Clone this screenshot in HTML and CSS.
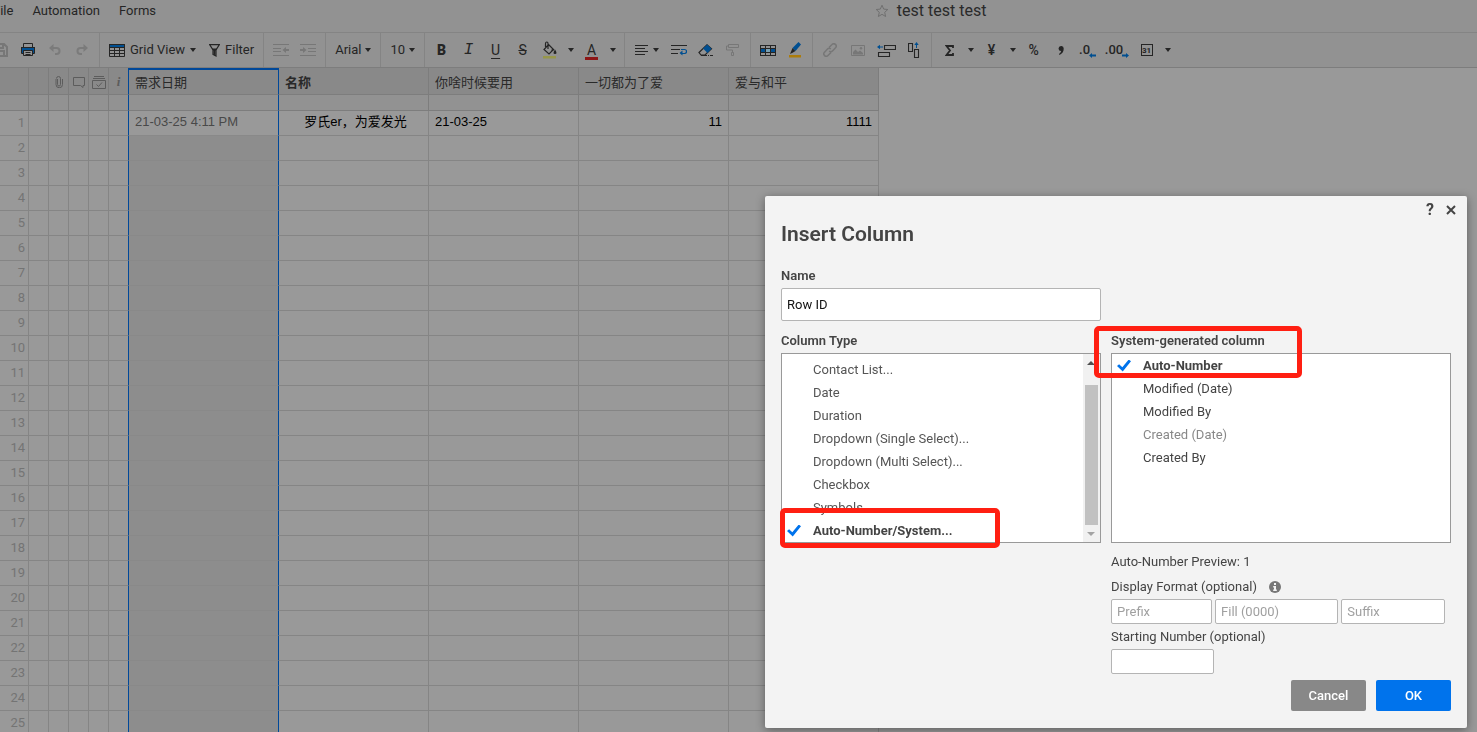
FILE: index.html
```html
<!DOCTYPE html>
<html lang="en">
<head>
<meta charset="utf-8">
<title>test test test</title>
<link rel="stylesheet" href="styles.css">
</head>
<body>
<header class="menubar">
  <nav class="menus"><a href="#">File</a><a href="#">Automation</a><a href="#">Forms</a></nav>
  <button class="star" aria-label="Favorite"><svg width="14" height="14" viewBox="0 0 14 14" fill="none" stroke="#707070"><path d="M7 1.2l1.7 3.9 4.1.4-3.1 2.8.9 4.2L7 10.300l-3.600 2.200.9-4.200L1.200 5.500l4.100-.4z"/></svg></button>
  <h1 class="sheet-name">test test test</h1>
</header>

<div class="toolbar" role="toolbar" aria-label="Formatting">
  <div class="group group-file">
    <button class="tool" aria-label="Save"><svg width="14" height="14" viewBox="0 0 14 14" fill="none" stroke="#777" stroke-width="2"><path d="M1 1h9l3 3v9H1zM4 1v4h5V1M4 13V8h6v5"/></svg></button>
    <button class="tool" aria-label="Print"><svg width="14" height="14" viewBox="0 0 14 14"><path d="M0 4h14v6h-2V8H2v2H0z" fill="#004f91"/><path d="M2.500 4V.5h9V4M.5 4v6.500h2M13.500 4v6.500h-2M2.500 7.500h9v5h-9zM4.500 9.500h5M4.500 11.500h5M.5 4.500h13" fill="none" stroke="#252525"/></svg></button>
    <button class="tool" aria-label="Undo"><svg width="12" height="12" viewBox="0 0 12 12" fill="none" stroke="#7b7b7b" stroke-width="2"><path d="M2 4h5.500a3 3 0 0 1 0 6H6"/><path d="M4.500 0v8L0 4z" fill="#7b7b7b" stroke="none"/></svg></button>
    <button class="tool" aria-label="Redo"><svg width="12" height="12" viewBox="0 0 12 12" fill="none" stroke="#7b7b7b" stroke-width="2"><path d="M10 4H4.500a3 3 0 0 0 0 6H6"/><path d="M7.500 0v8L12 4z" fill="#7b7b7b" stroke="none"/></svg></button>
  </div>
  <div class="group group-view">
    <button class="text-tool"><svg width="16" height="13" viewBox="0 0 16 13"><path d="M0 0h16v4H0z" fill="#252525"/><path d="M1 1h14v2H1z" fill="#004f91"/><path d="M.5 3.500v9h15v-9M.5 6.500h15M.5 9.500h15M5.500 3v10M10.500 3v10" fill="none" stroke="#252525"/></svg>Grid View<i class="caret"></i></button>
    <button class="text-tool"><svg width="11" height="13" viewBox="0 0 11 13" fill="#252525"><path d="M.6.6h9.800L7 6v6L4 10.500V6z" fill="none" stroke="#252525" stroke-width="1.200"/><path d="M3 4.500h5L6.500 7v4.500l-2-1V7z"/></svg>Filter</button>
  </div>
  <div class="group">
    <button class="tool" aria-label="Outdent"><svg width="16" height="12" viewBox="0 0 16 12" fill="none" stroke="#777"><path d="M0 .5h16M0 4.500h8M0 7.500h8M0 11.500h16"/><path d="M16 6h-4" stroke-width="2"/><path d="M13 3v6L9.500 6z" fill="#777" stroke="none"/></svg></button>
    <button class="tool" aria-label="Indent"><svg width="16" height="12" viewBox="0 0 16 12" fill="none" stroke="#777"><path d="M0 .5h16M8 4.500h8M8 7.500h8M0 11.500h16"/><path d="M0 6h4" stroke-width="2"/><path d="M3 3v6l3.500-3z" fill="#777" stroke="none"/></svg></button>
  </div>
  <div class="group group-font"><button class="text-tool">Arial<i class="caret"></i></button></div>
  <div class="group group-font"><button class="text-tool">10<i class="caret"></i></button></div>
  <div class="group">
    <button class="tool glyph bold">B</button>
    <button class="tool glyph italic">I</button>
    <button class="tool glyph underline">U</button>
    <button class="tool glyph strike">S</button>
    <button class="tool" aria-label="Fill color"><svg width="16" height="18" viewBox="0 0 16 18"><path d="M6.500 3.500L11.500 8.500l-4.500 4.500-5-4.500zM6 8V2.500Q6 1 4.800 1T3.500 2.500V6" fill="none" stroke="#252525" stroke-width="1.200"/><path d="M9.500 8.500l2-.5 1 1-3 1z" fill="#252525"/><path d="M13 8.500q3 4.500 0 4.500t0-4.500" fill="#252525"/><path d="M1 15h13v2.500H1z" fill="#97974a"/></svg></button>
    <button class="caret-tool" aria-label="Fill colors"><i class="caret"></i></button>
    <button class="tool" aria-label="Text color"><span class="text-color">A</span></button>
    <button class="caret-tool" aria-label="Text colors"><i class="caret"></i></button>
  </div>
  <div class="group group-align">
    <button class="align-tool" aria-label="Align"><svg width="13" height="12" viewBox="0 0 13 12" stroke="#252525"><path d="M0 1.500h13M0 4.500h10M0 7.500h13M0 10.500h10"/></svg><i class="caret"></i></button>
    <button class="tool" aria-label="Wrap"><svg width="16" height="12" viewBox="0 0 16 12" fill="none"><path d="M0 1.500h16M0 5.500h9M0 9.500h7" stroke="#252525"/><path d="M10 5.500h3.500q2 0 2 2t-2 2H10" stroke="#004f91" stroke-width="1.200"/><path d="M11.500 6.500v5L8.500 9z" fill="#004f91"/></svg></button>
    <button class="tool" aria-label="Clear format"><svg width="15" height="12" viewBox="0 0 15 12"><path d="M1 8.500L9 .8l4.500 4L7 11H3z" fill="none" stroke="#252525" stroke-width="1.200"/><path d="M5 4.500L9.300.5l4.200 4.300L9.500 9z" fill="#004f91"/><path d="M3 11.500h12" stroke="#252525" stroke-dasharray="6 1 1 1"/></svg></button>
    <button class="tool" aria-label="Format painter"><svg width="13" height="12" viewBox="0 0 13 12" fill="none" stroke="#777"><path d="M2.500.5h10v3h-10zM2.500 2H.5v4h6v2M5.500 8.500h2v3h-2z"/></svg></button>
  </div>
  <div class="group">
    <button class="tool" aria-label="Conditional formatting"><svg width="16" height="11" viewBox="0 0 16 11"><path d="M0 0h16v11H0z" fill="#252525"/><path d="M1 1h4v2H1zM6 1h4v2H6zM11 1h4v2h-4zM6 8h4v2H6zM1 8h4v2H1zM11 8h4v2h-4z" fill="#929292"/><path d="M1 4h4v3H1zM11 4h4v3h-4z" fill="#004f91"/><path d="M6 4h4v3H6z" fill="#7aa0b2"/></svg></button>
    <button class="tool" aria-label="Highlight changes"><svg width="14" height="16" viewBox="0 0 14 16"><path d="M10.500 0L13 2.500 7.500 9 4.500 6z" fill="#004f91"/><path d="M4.500 6l3 3-2.500 1.500L2 12z" fill="#252525"/><path d="M1 13h12v2.500H1z" fill="#ac7c0a"/></svg></button>
  </div>
  <div class="group group-insert">
    <button class="tool" aria-label="Link"><svg width="14" height="14" viewBox="0 0 14 14" fill="none" stroke="#777" stroke-width="1.500"><path d="M6 4.500L9 1.500a2.300 2.300 0 0 1 3.500 3.300L9.500 8a2.300 2.300 0 0 1-3.300 0M8 9.500l-3 3A2.300 2.300 0 0 1 1.500 9.200L4.500 6a2.300 2.300 0 0 1 3.300 0"/></svg></button>
    <button class="tool" aria-label="Image"><svg width="14" height="11" viewBox="0 0 14 11"><path d="M.5.5h13v10H.5z" fill="none" stroke="#777"/><path d="M2 9.500V7l2.500-2.500L7 7l2-1.500L12 8v1.500z" fill="#777"/><circle cx="10" cy="3.200" r="1.200" fill="#777"/></svg></button>
    <button class="tool" aria-label="Insert row"><svg width="19" height="13" viewBox="0 0 19 13" fill="none"><path d="M7.500 1.500h11v4h-11zM1.500 8.500h11v4h-11z" stroke="#252525" stroke-width="1.100"/><path d="M2 3h4" stroke="#004f91"/><path d="M3 .8v4.400L0 3z" fill="#004f91"/></svg></button>
    <button class="tool" aria-label="Insert column"><svg width="12" height="16" viewBox="0 0 12 16" fill="none"><path d="M.5 1.500h4v8h-4zM6.500 7.500h4v8h-4z" stroke="#252525" stroke-width="1.100"/><path d="M8.500 2v4" stroke="#004f91"/><path d="M6.300 3h4.400L8.500 0z" fill="#004f91"/></svg></button>
  </div>
  <div class="group group-number">
    <button class="tool" aria-label="Sum"><svg width="9" height="11" viewBox="0 0 9 11" fill="none" stroke="#252525" stroke-width="1.800"><path d="M8 3V1H1.500L5 5.500 1.500 10H8V8"/></svg></button>
    <button class="caret-tool" aria-label="Functions"><i class="caret"></i></button>
    <button class="tool glyph">¥</button>
    <button class="caret-tool" aria-label="Currencies"><i class="caret"></i></button>
    <button class="tool glyph">%</button>
    <button class="tool" aria-label="Thousands"><svg width="6" height="9" viewBox="0 0 6 9" fill="#252525"><path d="M3 0a2.600 2.600 0 0 1 2.700 2.800Q5.700 7 1.500 9L1 8q2-1.200 2.200-2.900A2.500 2.500 0 1 1 3 0"/></svg></button>
    <button class="tool decimal">.0<svg width="7" height="5" viewBox="0 0 7 5" fill="#004f91"><path d="M3 0v1.500h4v2H3V5L0 2.500z"/></svg></button>
    <button class="tool decimal wide">.00<svg width="7" height="5" viewBox="0 0 7 5" fill="#004f91"><path d="M4 0v1.500H0v2h4V5l3-2.500z"/></svg></button>
    <button class="tool" aria-label="Date format"><span class="date-icon">31</span></button>
    <button class="caret-tool" aria-label="Date formats"><i class="caret"></i></button>
  </div>
</div>

<main class="sheet">
<table class="grid">
  <colgroup><col class="c-num"><col class="c-icon" span="5"><col class="c-data" span="5"></colgroup>
  <thead>
    <tr class="names"><th><th>
      <th class="icon"><svg width="8" height="12" viewBox="0 0 8 12" fill="none" stroke="#5c5c5c"><path d="M2.500 3v5.500a1.500 1.500 0 0 0 3 0V2.500a2 2 0 0 0-4 0"/><path d="M7.500 3v5.500a3 3 0 0 1-6.500 0V3"/></svg>
      <th class="icon"><svg width="12" height="11" viewBox="0 0 12 11" fill="none" stroke="#5c5c5c"><path d="M.5.5h11v8H10v2L7.500 8.500h-7z"/></svg>
      <th class="icon"><svg width="14" height="13" viewBox="0 0 14 13" fill="none" stroke="#5c5c5c"><path d="M.5 4.500h13v8H.5zM1 2.500h12M2 .5h10M4.500 8.500l2 2 3.500-4"/></svg>
      <th class="info-head">i
      <th class="selected">需求日期<th class="primary">名称<th>你啥时候要用<th>一切都为了爱<th>爱与和平
    <tr class="filters"><th><th><th><th><th><th class="info-head"><th class="selected"><th><th><th><th>
  </thead>
</table>
<table class="grid rows">
  <colgroup><col class="c-num"><col class="c-icon" span="5"><col class="c-data" span="5"></colgroup>
  <tbody>
    <tr><th>1<td><td><td><td><td><td class="current">21-03-25 4:11 PM<td class="center">罗氏er，为爱发光<td>21-03-25<td class="number">11<td class="number">1111
    <tr><th>2<td><td><td><td><td><td><td><td><td><td>
    <tr><th>3<td><td><td><td><td><td><td><td><td><td>
    <tr><th>4<td><td><td><td><td><td><td><td><td><td>
    <tr><th>5<td><td><td><td><td><td><td><td><td><td>
    <tr><th>6<td><td><td><td><td><td><td><td><td><td>
    <tr><th>7<td><td><td><td><td><td><td><td><td><td>
    <tr><th>8<td><td><td><td><td><td><td><td><td><td>
    <tr><th>9<td><td><td><td><td><td><td><td><td><td>
    <tr><th>10<td><td><td><td><td><td><td><td><td><td>
    <tr><th>11<td><td><td><td><td><td><td><td><td><td>
    <tr><th>12<td><td><td><td><td><td><td><td><td><td>
    <tr><th>13<td><td><td><td><td><td><td><td><td><td>
    <tr><th>14<td><td><td><td><td><td><td><td><td><td>
    <tr><th>15<td><td><td><td><td><td><td><td><td><td>
    <tr><th>16<td><td><td><td><td><td><td><td><td><td>
    <tr><th>17<td><td><td><td><td><td><td><td><td><td>
    <tr><th>18<td><td><td><td><td><td><td><td><td><td>
    <tr><th>19<td><td><td><td><td><td><td><td><td><td>
    <tr><th>20<td><td><td><td><td><td><td><td><td><td>
    <tr><th>21<td><td><td><td><td><td><td><td><td><td>
    <tr><th>22<td><td><td><td><td><td><td><td><td><td>
    <tr><th>23<td><td><td><td><td><td><td><td><td><td>
    <tr><th>24<td><td><td><td><td><td><td><td><td><td>
    <tr><th>25<td><td><td><td><td><td><td><td><td><td>
  </tbody>
</table>
</main>

<form class="dialog" role="dialog" aria-labelledby="dialog-title">
  <div class="dialog-tools">
    <button type="button" aria-label="Help" class="help">?</button>
    <button type="button" aria-label="Close"><svg width="10" height="10" viewBox="0 0 10 10" stroke="#444" stroke-width="2"><path d="M1 1l8 8M9 1l-8 8"/></svg></button>
  </div>
  <h2 id="dialog-title">Insert Column</h2>
  <div class="columns">
    <div class="name-field">
      <label class="heading" for="col-name">Name</label>
      <input class="field name-input" id="col-name" type="text" value="Row ID">
    </div>
    <div class="type-field">
      <div class="heading" id="type-label">Column Type</div>
      <div class="list">
        <div class="options scrolled" role="radiogroup" aria-labelledby="type-label">
          <label><input type="radio" name="type">Contact List...</label>
          <label><input type="radio" name="type">Date</label>
          <label><input type="radio" name="type">Duration</label>
          <label><input type="radio" name="type">Dropdown (Single Select)...</label>
          <label><input type="radio" name="type">Dropdown (Multi Select)...</label>
          <label><input type="radio" name="type">Checkbox</label>
          <label><input type="radio" name="type">Symbols</label>
          <label><input type="radio" name="type" checked>Auto-Number/System...</label>
        </div>
        <div class="scrollbar"><i class="arrow up"></i><i class="thumb"></i><i class="arrow down"></i></div>
      </div>
    </div>
    <div class="system-field">
      <div class="heading" id="system-label">System-generated column</div>
      <div class="list">
        <div class="options dark" role="radiogroup" aria-labelledby="system-label">
          <label><input type="radio" name="system" checked>Auto-Number</label>
          <label><input type="radio" name="system">Modified (Date)</label>
          <label><input type="radio" name="system">Modified By</label>
          <label class="off"><input type="radio" name="system" disabled>Created (Date)</label>
          <label><input type="radio" name="system">Created By</label>
        </div>
      </div>
    </div>
    <div class="format">
      <div class="line">Auto-Number Preview: 1</div>
      <div class="line">Display Format (optional)<svg width="12" height="12" viewBox="0 0 12 12"><circle cx="6" cy="6" r="6" fill="#777"/><path d="M5 2h2v2H5zM4.200 5H7v3.500h.8V10H4.200V8.500H5v-2h-.8z" fill="#f3f3f3"/></svg></div>
      <div class="parts">
        <input class="field prefix" type="text" placeholder="Prefix" aria-label="Prefix">
        <input class="field fill" type="text" placeholder="Fill (0000)" aria-label="Fill">
        <input class="field suffix" type="text" placeholder="Suffix" aria-label="Suffix">
      </div>
      <label class="line" for="start">Starting Number (optional)</label>
      <input class="field start" id="start" type="text">
    </div>
  </div>
  <div class="actions"><button type="button" class="cancel">Cancel</button><button type="submit" class="ok">OK</button></div>
  <div class="mark mark-type"></div>
  <div class="mark mark-system"></div>
</form>
</body>
</html>
```

FILE: styles.css
```css
* { box-sizing: border-box; }
body {
  margin: 0;
  height: 100vh;
  display: flex;
  flex-direction: column;
  overflow: hidden;
  background: #999;
  color: #252525;
  font: 13px/16px Roboto, "Noto Sans CJK SC", sans-serif;
}
button { border: 0; padding: 0; background: none; color: inherit; font: inherit; }
svg { display: block; flex: none; }

.menubar { display: flex; align-items: center; height: 32px; padding-bottom: 10px; background: #929292; flex: none; }
.menus { display: flex; gap: 19px; flex: 0 0 59.3%; margin-left: -7px; }
.menus a { color: #252525; text-decoration: none; }
.star { margin-left: 6px; }
.sheet-name { margin: 0 0 0 8px; font-size: 16px; font-weight: 400; color: #2a2a2a; }

.toolbar { display: flex; flex: none; height: 36px; background: #929292; border: solid #848484; border-width: 1px 0; border-bottom-color: #7d7d7d; }
.group { display: flex; align-items: center; padding: 0 4px 0 3px; border-right: 1px solid #848484; }
.group-file { margin-left: -13px; padding: 0 4px 0 0; }
.group-view { padding: 0 9px; gap: 13px; }
.group-view .text-tool { gap: 5px; }
.group-font { padding: 0 9px; }
.group-align { padding: 0 4px; }
.group-number { padding-left: 4px; border-right: 0; }
.tool { display: flex; width: 27px; height: 34px; align-items: center; justify-content: center; }
.group-insert { padding-right: 3px; }
.group-insert .tool { width: 28px; }
.text-tool { display: flex; align-items: center; gap: 4px; white-space: nowrap; }
.caret-tool { display: flex; width: 15px; justify-content: center; }
.align-tool { display: flex; width: 36px; align-items: center; gap: 5px; padding-left: 6px; }
.caret { border: solid transparent; border-width: 4px 3px 0; border-top-color: #252525; }
.glyph { font-size: 14px; font-weight: 500; }
.bold { font-weight: 900; }
.italic { font-family: "Liberation Mono", monospace; font-style: italic; font-size: 16px; }
.underline { text-decoration: underline; text-underline-offset: 3px; font-weight: 400; }
.strike { text-decoration: line-through; font-weight: 400; }
.text-color { font-size: 14px; line-height: 14px; width: 13px; border-bottom: 3px solid #8d1616; padding-top: 2px; }
.decimal { font-weight: 500; align-items: center; }
.decimal svg { align-self: flex-end; margin-left: -1px; margin-bottom: 9px; }
.wide { width: 32px; }
.date-icon { width: 12px; height: 12px; border: 1px solid #252525; font-size: 8px; line-height: 8px; font-weight: 700; padding-top: 2px; }

.sheet { flex: 1; overflow: hidden; }
.grid { width: 879px; table-layout: fixed; border-collapse: separate; border-spacing: 0; }
.c-num { width: 29px; }
.c-icon { width: 20px; }
.c-data { width: 150px; }
.grid th, .grid td { padding: 0 6px; border: solid #858585; border-width: 0 1px 1px 0; font-weight: 400; text-align: left; overflow: hidden; white-space: nowrap; }
.grid .names th { height: 27px; padding-top: 4px; background: #898989; border-color: #7d7d7d; color: #292929; }
.grid .names .icon, .grid .names .info-head { padding: 2px 0 0; text-align: center; }
.icon svg { margin: 0 auto; }
.grid .names .info-head { font: italic 700 13px "Liberation Serif", serif; color: #5c5c5c; }
.grid .names .primary { font-weight: 700; }
.grid .names .selected { padding-top: 2px; border-top: 2px solid #004899; }
.filters th { height: 16px; background: #929292; border-color: #7d7d7d; }
.rows th, .rows td { height: 25px; color: #000; }
.grid.rows td { padding-bottom: 2px; font-family: "Liberation Sans", "Noto Sans CJK SC", sans-serif; }
.grid.rows th { padding-right: 3px; text-align: right; color: #747474; }
.rows td:nth-child(7) { background: #8d8d8d; }
.rows .current { color: #494949; }
.grid.rows td:nth-child(7) { border-bottom-color: #898989; }
.grid.rows .current { background: #999; color: #494949; }
.grid.rows td:nth-child(6), .grid.rows td:nth-child(7), .grid tr .selected, .grid tr .info-head { border-right-color: #004899; }
.grid.rows .center { text-align: center; padding-left: 10px; }
.grid.rows .number { text-align: right; }

.dialog { position: fixed; right: 10px; bottom: 4px; width: 702px; padding: 0 16px 17px; border-radius: 2px; background: #f3f3f3; color: #444; box-shadow: 0 2px 10px rgba(0, 0, 0, .4); }
.dialog-tools { display: flex; justify-content: flex-end; align-items: center; gap: 12px; height: 28px; margin-right: -5px; }
.help { font-size: 16px; font-weight: 700; }
h2 { margin: 0 0 19px; font-size: 21px; line-height: 20px; font-weight: 600; }
.columns { display: grid; grid-template-columns: minmax(0, 320fr) minmax(0, 340fr); column-gap: 10px; }
.name-field { grid-column: 1; margin-bottom: 7px; }
.type-field { grid-column: 1; }
.heading, .line { display: flex; align-items: center; height: 25px; }
.heading { font-weight: 600; }
.field { display: block; height: 25px; padding: 0 5px; border: 1px solid #b4b4b4; border-radius: 2px; background: #fff; color: #111; font: inherit; min-width: 0; }
.field::placeholder { color: #a0a0a0; opacity: 1; }
.name-input { width: 100%; height: 33px; }
.list { display: flex; height: 190px; border: 1px solid #999; background: #fff; }
.options { display: flex; flex: 1; flex-direction: column; overflow: hidden; }
.options.scrolled { justify-content: flex-end; }
.options label { display: flex; flex: none; align-items: center; height: 23px; padding-left: 5px; gap: 12px; color: #555; white-space: nowrap; }
.options.dark label { color: #444; }
.options label.off { color: #888; }
.options label:has(:checked) { font-weight: 700; color: #444; }
.options input { appearance: none; flex: none; width: 14px; height: 12px; margin: 0; }
.options input:checked { background: #0073ec; clip-path: polygon(0 54%, 15% 40%, 38% 64%, 84% 0, 100% 15%, 41% 100%); }
.scrollbar { display: flex; flex-direction: column; width: 17px; padding: 0 2px 0 1px; align-items: center; background: #f1f1f1; }
.arrow { height: 4px; margin: 7px 0 6px; border: solid transparent; border-width: 0 4px 4px; border-bottom-color: #505050; }
.thumb { flex: 1; width: 13px; margin-top: 14px; background: #c1c1c1; }
.down { border-width: 4px 4px 0; border-top-color: #a3a3a3; }
.format { grid-column: 2; padding-top: 6px; }
.line svg { margin-left: 12px; }
.parts { display: flex; gap: 3px; padding-right: 6px; }
.prefix { flex: 100 1 0; }
.fill { flex: 125 1 0; }
.suffix { flex: 103 1 0; }
.start { width: 103px; }
.actions { display: flex; justify-content: flex-end; gap: 10px; margin-top: 6px; }
.actions button { width: 75px; height: 31px; border-radius: 2px; color: #fff; font-weight: 500; }
.actions .cancel { background: #888; }
.actions .ok { background: #0073ec; }
.mark { position: absolute; border: 5px solid #ff1f12; border-radius: 5px; pointer-events: none; }
.mark-type { left: 15px; top: 312px; width: 220px; height: 40px; }
.mark-system { left: 329px; top: 130px; width: 208px; height: 52px; }
```
